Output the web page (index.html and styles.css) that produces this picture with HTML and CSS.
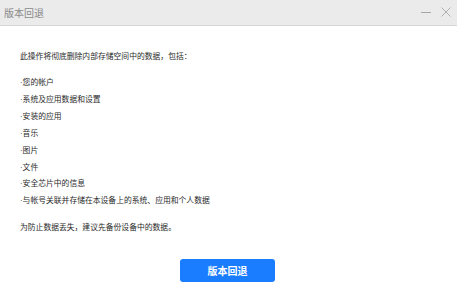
FILE: index.html
```html
<!DOCTYPE html>
<html>
<head>
	<meta charset="utf-8">
	<title>版本回退</title>
	<link rel="stylesheet" href="styles.css">
</head>
<body>

<div class="titlebar">
	<span class="title">版本回退</span>
	<span class="controls">
		<svg class="ctl" width="12" height="12" viewBox="0 0 12 12"><line x1="1" y1="6.5" x2="11" y2="6.5" stroke="#a8a8a8" stroke-width="1"/></svg>
		<svg class="ctl" width="12" height="12" viewBox="0 0 12 12"><path d="M1.5 1.5 L10.5 10.5 M10.5 1.5 L1.5 10.5" stroke="#b0b0b0" stroke-width="1" fill="none"/></svg>
	</span>
</div>

<div class="content">
	<p class="intro">此操作将彻底删除内部存储空间中的数据，包括：</p>
	<ul class="items">
		<li>·您的帐户</li>
		<li>·系统及应用数据和设置</li>
		<li>·安装的应用</li>
		<li>·音乐</li>
		<li>·图片</li>
		<li>·文件</li>
		<li>·安全芯片中的信息</li>
		<li>·与帐号关联并存储在本设备上的系统、应用和个人数据</li>
	</ul>
	<p class="note">为防止数据丢失，建议先备份设备中的数据。</p>
	<div class="actions">
		<button class="primary">版本回退</button>
	</div>
</div>

</body>
</html>
```

FILE: styles.css
```css
body {
	margin:0;
	background-color:#ffffff;
	font-family:"Liberation Sans", "Noto Sans CJK SC", sans-serif;
	color:#2a2a2a;
}

.titlebar {
	height:25px;
	background-color:#ebebeb;
	border-bottom:1px solid #d6d6d6;
	display:flex;
	align-items:center;
	justify-content:space-between;
	padding:0 5px 0 4px;
}
.title {
	font-size:10px;
	color:#8a8a8a;
}
.controls {
	display:flex;
	gap:8px;
	margin-top:-1px;
}
.ctl {
	display:block;
}

.content {
	padding:0 20px;
}
.intro {
	margin:22px 0 0 0;
	font-size:7.8px;
	line-height:17px;
}
.items {
	list-style:none;
	margin:10px 0 0 0;
	padding:0;
	font-size:7.8px;
	line-height:16.9px;
}
.note {
	margin:9px 0 0 0;
	font-size:7.8px;
	line-height:17px;
}

.actions {
	display:flex;
	justify-content:center;
	margin-top:23px;
	padding-right:2px;
}
.primary {
	width:95px;
	height:23px;
	border:none;
	border-radius:3px;
	background-color:#1a7dff;
	color:#ffffff;
	font-family:"Noto Sans CJK SC", sans-serif;
	font-size:10px;
	font-weight:bold;
	padding:0;
}
```
